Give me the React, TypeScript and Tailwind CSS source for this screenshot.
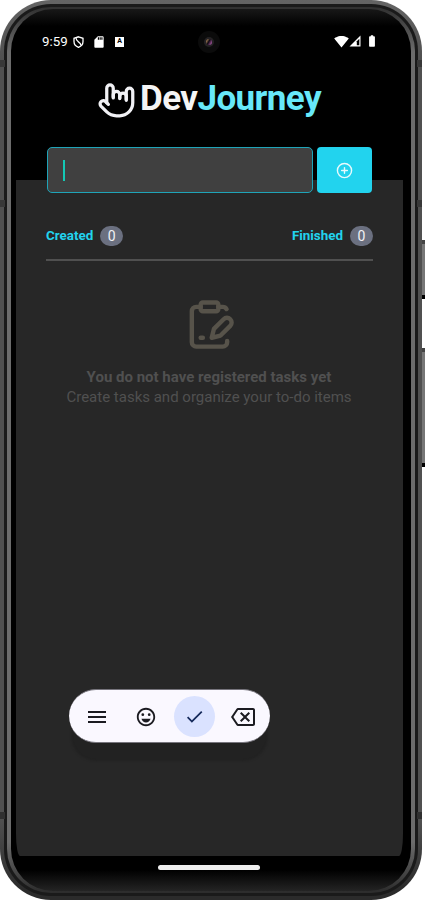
import React from "react";
import { HandMetal, CirclePlus } from "lucide-react";
import { MdMenu, MdCheck, MdOutlineBackspace, MdSignalWifi4Bar, MdBatteryFull, MdSdCard, MdOutlineEmojiEmotions } from "react-icons/md";

function StatusBar() {
  return (
    <div className="flex h-[52px] items-start justify-between pl-[26px] pr-[24px] pt-[22px] text-white">
      <div className="flex h-[14px] items-center">
        <span className="w-[31px] whitespace-nowrap pt-px text-[13.3px] leading-[14px]">9:59</span>
        <svg className="mt-px h-[12px] w-[11px]" viewBox="0 0 11 12" fill="none" stroke="white" strokeWidth="1.3">
          <path d="M5.5 0.8 10 2.3v3.3c0 2.7-1.8 4.8-4.5 5.8C2.8 10.4 1 8.3 1 5.600V2.300Z" />
          <path d="M3.200 2.200c-.5 4 4.600 3.200 4.800 7.200" />
        </svg>
        <MdSdCard className="ml-[8px] mt-px h-[14px] w-[14px]" />
        <span className="ml-[9px] mt-px flex h-[10px] w-[9px] items-center justify-center bg-white text-[7px] font-bold leading-none text-black">A</span>
      </div>
      <div className="flex h-[14px] items-center">
        <MdSignalWifi4Bar className="h-[15px] w-[15px]" />
        <svg className="h-[12px] w-[12px]" viewBox="0 0 12 12">
          <path d="M11.500 0.500V11.500H0.500Z" fill="white" />
          <path d="M10.300 3.800v6.500H7.800V6.300Z" fill="black" />
        </svg>
        <MdBatteryFull className="ml-[4px] h-[14px] w-[14px]" />
      </div>
    </div>
  );
}

function Counter({ label, value }: { label: string; value: number }) {
  return (
    <div className="flex items-center gap-[7px]">
      <span className="text-[13.4px] font-bold leading-5 text-[#22d3ee]">{label}</span>
      <span className="flex h-[20px] w-[23px] items-center justify-center rounded-full bg-[#6b7080] text-[14px] text-[#f1f1f5]">{value}</span>
    </div>
  );
}

function EmptyState() {
  return (
    <div className="flex flex-col items-center pr-px pt-[37px]">
      <svg className="h-[53px] w-[53px]" viewBox="0 0 24 24" fill="none" stroke="#57534a" strokeWidth="2" strokeLinecap="round" strokeLinejoin="round">
        <rect x="8" y="2" width="8" height="4" rx="1" />
        <path d="M8 4H6a2 2 0 0 0-2 2v14a2 2 0 0 0 2 2h12a2 2 0 0 0 2-2v-.5" />
        <path d="M16 4h2a2 2 0 0 1 1.730 1" />
        <path d="M8 18h1" />
        <path d="M18.400 9.600a2 2 0 0 1 3 3L17 17l-4 1 1-4Z" />
      </svg>
      <p className="mt-[16px] whitespace-nowrap text-[15px] font-bold leading-[20px] text-[#505050]">You do not have registered tasks yet</p>
      <p className="whitespace-nowrap text-[15px] leading-[21px] text-[#505050]">Create tasks and organize your to-do items</p>
    </div>
  );
}

function InputToolbar() {
  return (
    <div className="ml-[53px] flex h-[54px] w-[201px] items-center rounded-full border-y border-[#77757d] bg-[#faf8ff] pl-[16px] text-[#1b1b21] shadow-[0_20px_2px_-2px_#222222]">
      <MdMenu className="mt-px h-[24px] w-[24px]" />
      <MdOutlineEmojiEmotions className="ml-[26px] mt-px h-[22px] w-[22px]" />
      <span className="ml-[17px] flex h-[41px] w-[41px] items-center justify-center rounded-full bg-[#dae2ff] text-[#162a5c]">
        <MdCheck className="h-[21px] w-[21px]" />
      </span>
      <MdOutlineBackspace className="ml-[16px] mt-[2px] h-[24px] w-[24px]" />
    </div>
  );
}

function AntennaBands({ side }: { side: string }) {
  return (
    <div className={`absolute top-[60px] flex h-[759px] w-[5px] flex-col ${side}`}>
      <i className="h-[7px] bg-[#383838]" />
      <i className="mt-[133px] h-[7px] bg-[#383838]" />
      <i className="mt-auto h-[7px] bg-[#303030]" />
    </div>
  );
}

export default function App() {
  return (
    <div className="relative h-[900px] w-[425px] overflow-hidden bg-white font-['Roboto',sans-serif]">
      <div className="absolute left-[420px] top-[240px] h-[59px] w-[5px] border-b-4 border-t-4 border-b-black border-t-[#444] bg-[#777]" />
      <div className="absolute left-[420px] top-[348px] h-[119px] w-[5px] border-b-4 border-t-4 border-b-black border-t-[#444] bg-[#777]" />
      <div className="relative h-[900px] w-[422px] overflow-hidden rounded-[51px] bg-[linear-gradient(to_bottom,#646464_0,#505050_60px,#505050_820px,#2b2b2b_890px)] p-[4px]">
        <div className="h-full w-full rounded-[47px] bg-[#1a1a1a] p-[3px]">
          <div className="h-full w-full rounded-[44px] bg-[linear-gradient(to_bottom,#303030_0,#6c6c6c_45px,#6c6c6c_835px,#2d2d2d_885px)] px-[4px] py-[2px]">
            <div className="h-full w-full overflow-hidden rounded-[42px] bg-[linear-gradient(to_bottom,#181818_0,#000_17px,#000_861px,#242424_882px)] px-[5px]">
              <div className="flex w-[387px] flex-col">
                <header className="h-[171px] pt-[3px]">
                  <StatusBar />
                  <div className="flex h-[68px] items-center pl-[81px]">
                    <HandMetal className="mt-[2px] h-[39px] w-[39px] shrink-0 text-[#f1f1f5]" />
                    <h1 className="ml-[4px] mt-[2px] whitespace-nowrap text-[35px] font-bold leading-[40px] tracking-[-0.58px] text-[#f4f4f5]">
                      Dev<span className="text-[#67e8f9]">Journey</span>
                    </h1>
                  </div>
                </header>
                <main className="h-[676px] rounded-[0_0_4px_4px/0_0_22px_22px] bg-[#272727]">
                  <div className="-mt-[33px] flex gap-[4px] pl-[31px]">
                    <div className="flex h-[46px] w-[266px] items-center rounded-[5px] border border-[#1fa4b8] bg-[#404040] pl-[15px]">
                      <span className="h-[21px] w-[2px] bg-[#14c8b4]" />
                    </div>
                    <button className="flex h-[46px] w-[55px] items-center justify-center rounded-[4px] bg-[#22d3ee] text-[#e8fafd]">
                      <CirclePlus className="h-[17px] w-[17px]" strokeWidth={2} />
                    </button>
                  </div>
                  <div className="ml-[30px] mt-[32px] flex h-[36px] w-[327px] items-start justify-between border-b-2 border-[#505050] pt-px">
                    <Counter label="Created" value={0} />
                    <Counter label="Finished" value={0} />
                  </div>
                  <EmptyState />
                  <div className="mt-[281px]">
                    <InputToolbar />
                  </div>
                </main>
                <div className="ml-[142px] mt-[9px] h-[5px] w-[102px] rounded-full bg-[#eeeeee]" />
              </div>
            </div>
          </div>
        </div>
        <AntennaBands side="left-0" />
        <AntennaBands side="right-0" />
      </div>
      <div className="absolute left-[198px] top-[31px] flex h-[22px] w-[22px] items-center justify-center rounded-full bg-[#0b0b0b]">
        <div className="flex h-[10px] w-[10px] items-center justify-center rounded-full bg-[#242224]">
          <div className="h-[6px] w-[6px] rounded-full bg-[linear-gradient(120deg,#8b6a4a_20%,#0c0710_45%,#b05aa8_90%)]" />
        </div>
      </div>
    </div>
  );
}
